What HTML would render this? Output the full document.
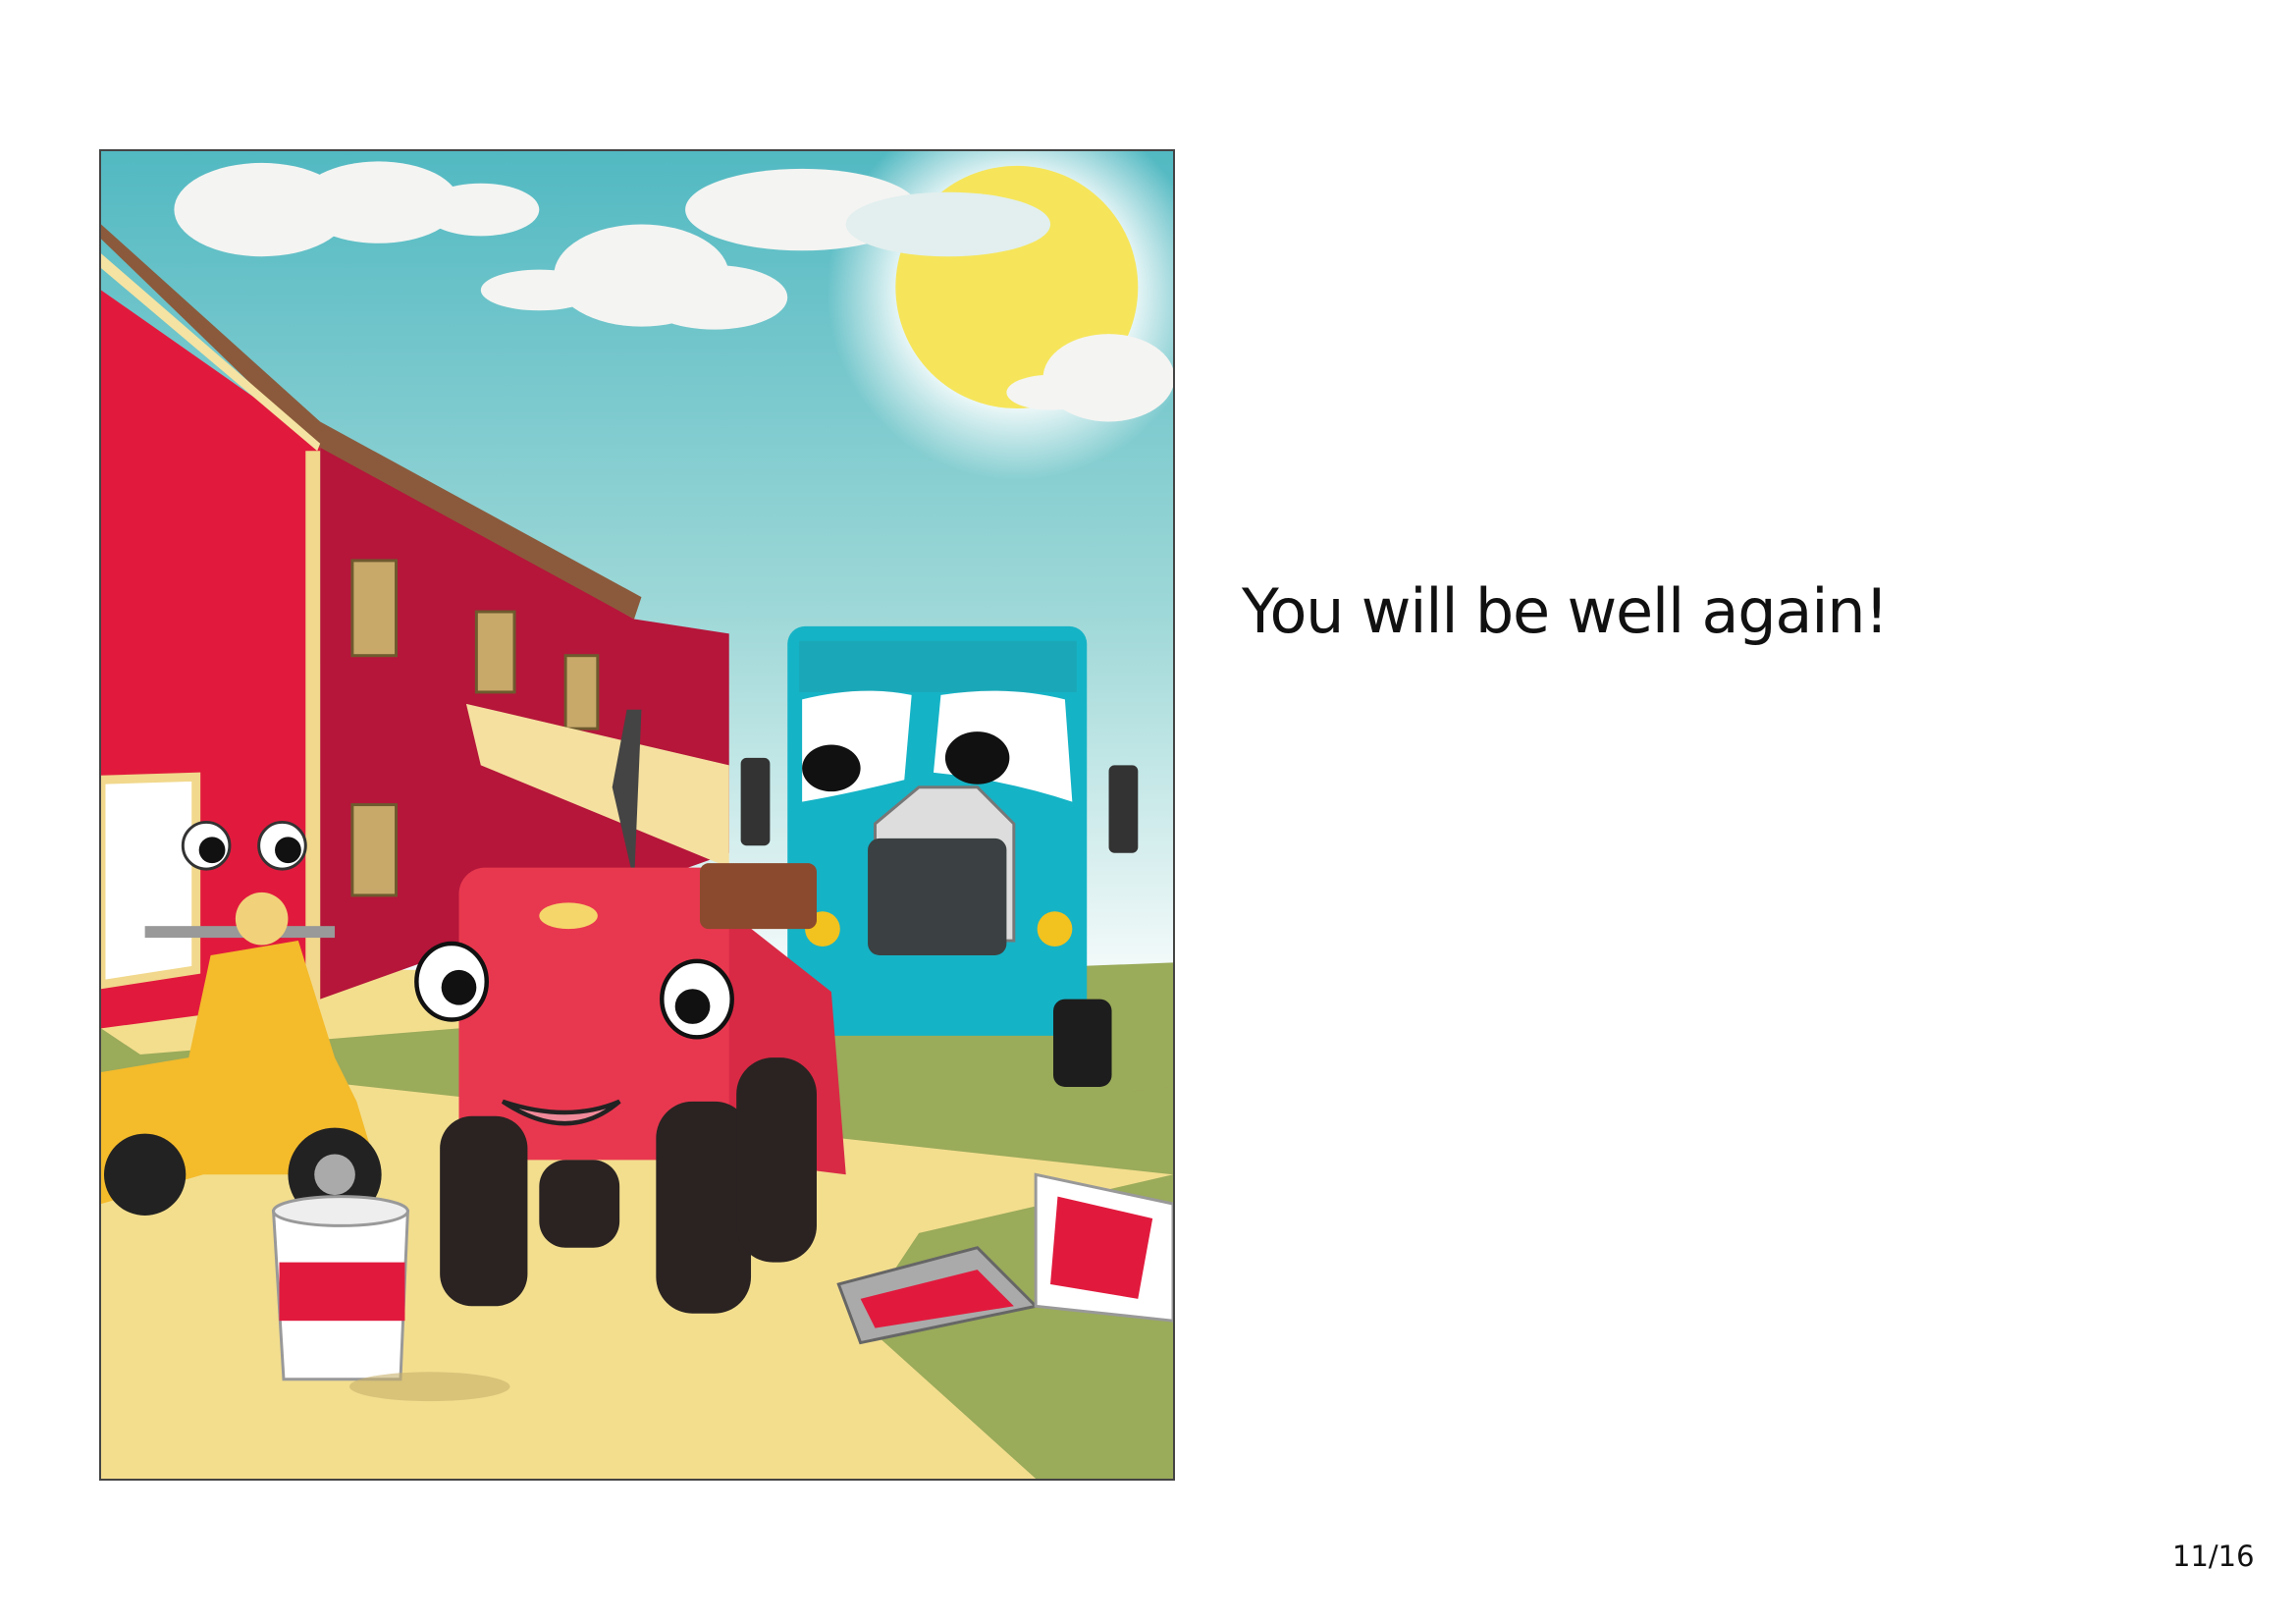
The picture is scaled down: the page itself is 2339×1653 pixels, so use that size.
<!DOCTYPE html>
<html><head><meta charset="utf-8"><style>
html,body{margin:0;padding:0;background:#fff;}
body{width:2339px;height:1653px;position:relative;overflow:hidden;font-family:"Liberation Sans","DejaVu Sans",sans-serif;}
#pic{position:absolute;left:101px;top:152px;width:1096px;height:1356px;border:2px solid #444;box-sizing:border-box;overflow:hidden;}
#t{position:absolute;left:1265px;top:586px;font-size:62px;color:#111;font-family:"DejaVu Sans","Liberation Sans",sans-serif;letter-spacing:-1.2px;}
#n{position:absolute;left:2213px;top:1568px;font-size:29px;color:#111;font-family:"DejaVu Sans",sans-serif;}
</style></head><body>
<div id="pic">
<svg width="1092" height="1352" viewBox="0 0 734 908" preserveAspectRatio="none">
<defs>
<linearGradient id="sky" x1="0" y1="0" x2="0" y2="1"><stop offset="0" stop-color="#52b9c2"/><stop offset="0.35" stop-color="#9fd8d8"/><stop offset="0.62" stop-color="#f4fafa"/></linearGradient>
<radialGradient id="glow" cx="0.5" cy="0.5" r="0.5"><stop offset="0.6" stop-color="#fff" stop-opacity="0.9"/><stop offset="1" stop-color="#fff" stop-opacity="0"/></radialGradient>
</defs>
<rect width="734" height="908" fill="url(#sky)"/>
<circle cx="627" cy="95" r="130" fill="url(#glow)"/>
<circle cx="627" cy="93" r="83" fill="#f6e55a"/>
<g fill="#f4f4f2">
<ellipse cx="110" cy="40" rx="60" ry="32"/><ellipse cx="190" cy="35" rx="55" ry="28"/><ellipse cx="260" cy="40" rx="40" ry="18"/>
<ellipse cx="370" cy="85" rx="60" ry="35"/><ellipse cx="420" cy="100" rx="50" ry="22"/><ellipse cx="300" cy="95" rx="40" ry="14"/>
<ellipse cx="480" cy="40" rx="80" ry="28"/><ellipse cx="580" cy="50" rx="70" ry="22" fill="#e2efee"/>
<ellipse cx="690" cy="155" rx="45" ry="30"/><ellipse cx="650" cy="165" rx="30" ry="12"/>
</g>
<rect x="0" y="560" width="734" height="348" fill="#f3de8e"/>
<path d="M0 620 L734 560 L734 908 L640 908 L520 800 L560 740 L734 700 Z" fill="#9aab5a"/>
<path d="M0 700 L60 640 L0 600Z" fill="#9aab5a"/>
<path d="M600 560 L734 555 L734 640 L640 650Z" fill="#9aab5a"/>
<path d="M0 95 L150 200 L150 580 L0 600Z" fill="#e11a3d"/>
<path d="M150 200 L365 320 L430 330 L430 480 L150 580Z" fill="#b5163a"/>
<path d="M0 60 L145 200 L365 320 L370 305 L150 185 L0 50Z" fill="#8b5a3c"/>
<path d="M0 80 L148 205 L150 200 L0 70Z" fill="#f5e3a3"/>
<rect x="140" y="205" width="10" height="380" fill="#f1d88c"/>
<g fill="#c8a96a" stroke="#6e5a2e" stroke-width="2">
<rect x="172" y="280" width="30" height="65"/><rect x="257" y="315" width="26" height="55"/><rect x="318" y="345" width="22" height="50"/><rect x="172" y="447" width="30" height="62"/>
</g>
<path d="M250 378 L430 420 L430 490 L260 420Z" fill="#f5e0a0"/>
<path d="M0 430 L65 428 L65 560 L0 570Z" fill="#fff" stroke="#f1d88c" stroke-width="6"/>
<rect x="470" y="325" width="205" height="280" rx="12" fill="#15b3c6"/>
<rect x="478" y="335" width="190" height="35" fill="#1aa8b8"/>
<path d="M480 375 Q520 365 555 372 L550 430 Q510 440 480 445Z" fill="#fff"/>
<path d="M575 372 Q620 365 660 375 L665 445 Q620 430 570 425Z" fill="#fff"/>
<ellipse cx="500" cy="422" rx="20" ry="16" fill="#111"/><ellipse cx="600" cy="415" rx="22" ry="18" fill="#111"/>
<path d="M530 460 L560 435 L600 435 L625 460 L625 540 L530 540Z" fill="#ddd" stroke="#777" stroke-width="2"/>
<rect x="525" y="470" width="95" height="80" rx="8" fill="#3b4142"/>
<circle cx="494" cy="532" r="12" fill="#f2c21e"/><circle cx="653" cy="532" r="12" fill="#f2c21e"/>
<rect x="438" y="415" width="20" height="60" rx="4" fill="#333"/><rect x="690" y="420" width="20" height="60" rx="4" fill="#333"/>
<rect x="652" y="580" width="40" height="60" rx="8" fill="#1d1d1d"/>
<path d="M75 550 L135 540 L160 620 L175 650 L190 700 L70 700 L0 720 L0 630 L60 620Z" fill="#f4bb2b"/>
<circle cx="30" cy="700" r="28" fill="#222"/><circle cx="160" cy="700" r="32" fill="#222"/><circle cx="160" cy="700" r="14" fill="#aaa"/>
<circle cx="72" cy="475" r="16" fill="#fff" stroke="#333" stroke-width="2"/><circle cx="124" cy="475" r="16" fill="#fff" stroke="#333" stroke-width="2"/>
<circle cx="76" cy="478" r="9" fill="#111"/><circle cx="128" cy="478" r="9" fill="#111"/>
<rect x="30" y="530" width="130" height="8" fill="#999"/><ellipse cx="110" cy="525" rx="18" ry="18" fill="#f1d27a"/>
<path d="M350 435 L360 382 L370 382 L365 500Z" fill="#444"/>
<rect x="245" y="490" width="200" height="200" rx="18" fill="#e8384f"/>
<path d="M430 520 L500 575 L510 700 L430 690Z" fill="#d82a45"/>
<rect x="410" y="487" width="80" height="45" rx="6" fill="#8b4a2d"/>
<ellipse cx="320" cy="523" rx="20" ry="9" fill="#f5d66b"/>
<ellipse cx="240" cy="568" rx="24" ry="26" fill="#fff" stroke="#111" stroke-width="3"/><circle cx="245" cy="572" r="12" fill="#111"/>
<ellipse cx="408" cy="580" rx="24" ry="26" fill="#fff" stroke="#111" stroke-width="3"/><circle cx="405" cy="585" r="12" fill="#111"/>
<path d="M275 650 Q320 680 355 650 Q320 665 275 650Z" fill="#f08a9a" stroke="#222" stroke-width="3"/>
<rect x="232" y="660" width="60" height="130" rx="22" fill="#2a2322"/>
<rect x="380" y="650" width="65" height="145" rx="25" fill="#2a2322"/>
<rect x="435" y="620" width="55" height="140" rx="25" fill="#2a2322"/>
<rect x="300" y="690" width="55" height="60" rx="18" fill="#2a2322"/>
<path d="M118 725 L210 725 L205 840 L125 840Z" fill="#fff" stroke="#999" stroke-width="2"/>
<ellipse cx="164" cy="725" rx="46" ry="10" fill="#eee" stroke="#999" stroke-width="2"/>
<rect x="122" y="760" width="86" height="40" fill="#e11a3d"/>
<ellipse cx="225" cy="845" rx="55" ry="10" fill="#c8b16a" opacity="0.6"/>
<path d="M505 775 L600 750 L640 790 L520 815Z" fill="#aaa" stroke="#666" stroke-width="2"/>
<path d="M520 785 L600 765 L625 790 L530 805Z" fill="#e11a3d"/>
<path d="M640 700 L734 720 L734 800 L640 790Z" fill="#fff" stroke="#999" stroke-width="2"/>
<path d="M655 715 L720 730 L710 785 L650 775Z" fill="#e11a3d"/>
</svg>
</div>
<div id="t">You will be well again!</div>
<div id="n">11/16</div>
</body></html>
